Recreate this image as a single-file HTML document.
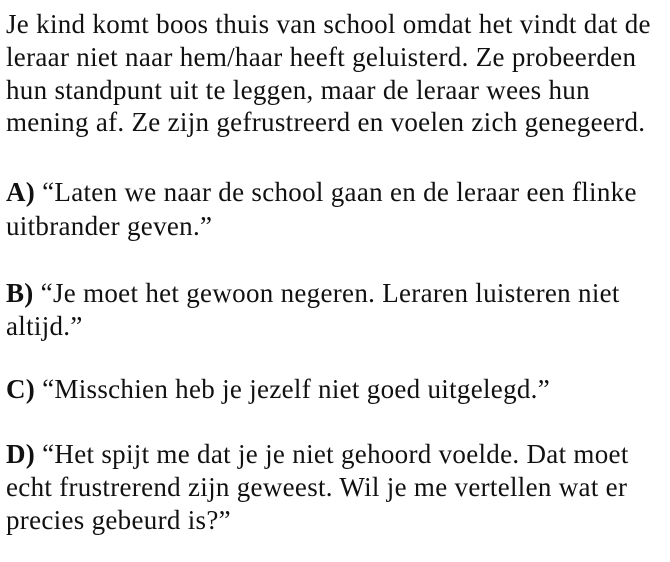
<!DOCTYPE html>
<html><head><meta charset="utf-8"><style>
html,body{margin:0;padding:0;background:#fff;width:670px;height:562px;overflow:hidden;position:relative}
body{font-family:"Liberation Serif",serif;font-size:27px;color:#111;letter-spacing:0.3px}
div{position:absolute;left:6px;line-height:32px;white-space:nowrap}
b{font-weight:bold}
</style></head><body>
<div style="top:8px">Je kind komt boos thuis van school omdat het vindt dat de</div>
<div style="top:41px">leraar niet naar hem/haar heeft geluisterd. Ze probeerden</div>
<div style="top:74px">hun standpunt uit te leggen, maar de leraar wees hun</div>
<div style="top:106px">mening af. Ze zijn gefrustreerd en voelen zich genegeerd.</div>
<div style="top:176px"><b>A)</b> “Laten we naar de school gaan en de leraar een flinke</div>
<div style="top:210px">uitbrander geven.”</div>
<div style="top:277px"><b>B)</b> “Je moet het gewoon negeren. Leraren luisteren niet</div>
<div style="top:310px">altijd.”</div>
<div style="top:373px"><b>C)</b> “Misschien heb je jezelf niet goed uitgelegd.”</div>
<div style="top:438px"><b>D)</b> “Het spijt me dat je je niet gehoord voelde. Dat moet</div>
<div style="top:471px">echt frustrerend zijn geweest. Wil je me vertellen wat er</div>
<div style="top:504px">precies gebeurd is?”</div>
</body></html>
